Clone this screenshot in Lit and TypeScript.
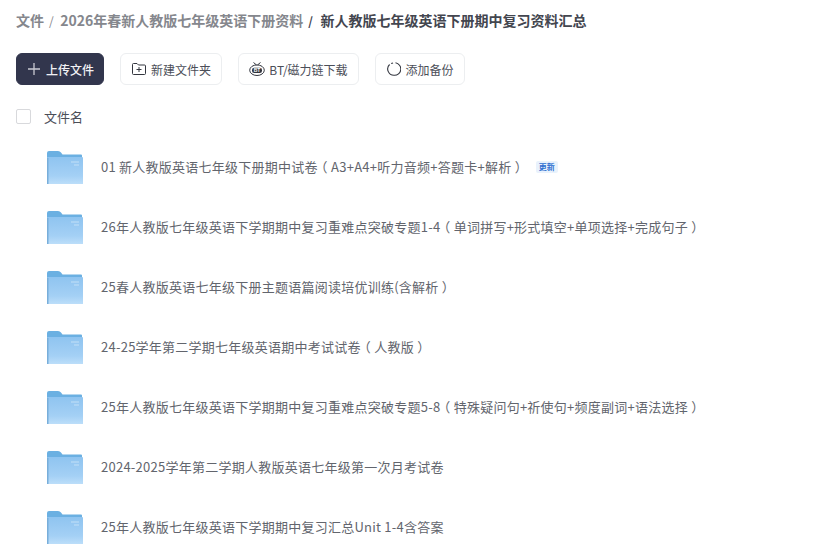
import { LitElement, html, css, svg } from "lit";
import { customElement } from "lit/decorators.js";

const ROWS = [
  "01 新人教版英语七年级下册期中试卷（A3+A4+听力音频+答题卡+解析）",
  "26年人教版七年级英语下学期期中复习重难点突破专题1-4（单词拼写+形式填空+单项选择+完成句子）",
  "25春人教版英语七年级下册主题语篇阅读培优训练(含解析）",
  "24-25学年第二学期七年级英语期中考试试卷（人教版）",
  "25年人教版七年级英语下学期期中复习重难点突破专题5-8（特殊疑问句+祈使句+频度副词+语法选择）",
  "2024-2025学年第二学期人教版英语七年级第一次月考试卷",
  "25年人教版七年级英语下学期期中复习汇总Unit 1-4含答案",
];

const label = (t: string) =>
  t.split(/([（）])/).map((p) => (p === "（" || p === "）" ? html`<span class="paren">${p}</span>` : p));

const folder = (i: number) => svg`<svg class="folder" viewBox="0 0 36 33" width="36" height="33">
  <defs><linearGradient id="g${i}" x1="0" y1="0" x2="0" y2="1"><stop offset="0" stop-color="#8fc4f0"/><stop offset="0.700" stop-color="#a4d0f5"/><stop offset="1" stop-color="#bcdef9"/></linearGradient></defs>
  <path d="M0 2 Q0 0 2 0 H11 Q13 0 14 1.500 L15.500 3.500 H34 Q35 3.500 35 4.500 V8 H0 Z" fill="#6bb0e2"/>
  <path d="M0 33 V7 Q0 6 1 6 H35 Q36 6 36 7 V33 Z" fill="url(#g${i})"/>
  <path d="M0 33 V7 L1.500 7 V33 Z" fill="#78aeda"/>
  <path d="M24 11 H32 M27 14 H32" stroke="#c3e0f7" stroke-width="1"/>
</svg>`;

@customElement("app-root")
export class AppRoot extends LitElement {
  static styles = css`
    :host { display: block; width: 817px; height: 548px; overflow: hidden; background: #fff;
      font-family: "Noto Sans CJK SC", "Noto Sans", sans-serif; color: #4a4d57; }
    .page { padding: 10px 16px 0; display: flex; flex-direction: column; }
    .crumbs { display: flex; align-items: center; height: 20px; font-size: 14px; font-weight: 700; color: #85878d; }
    .crumbs .sep { margin: 0 6.500px 0 5px; font-weight: 400; font-size: 12px; }
    .crumbs .cur { color: #43464f; margin-left: 1px; }
    .crumbs .sep.dark { color: #43464f; font-weight: 700; margin-left: 5px; }
    .actions { display: flex; gap: 16px; margin-top: 23px; }
    .btn { height: 32px; box-sizing: border-box; display: flex; align-items: center; justify-content: center;
      gap: 4px; border: 1px solid #eceef0; border-radius: 6px; font-size: 12px; color: #4b4e58; background: #fff; }
    .primary { width: 88px; padding-left: 2px; background: #32364d; border-color: #32364d; color: #f1f1f4; gap: 6px; font-weight: 500; }
    .b1 { width: 102px; padding-left: 1px; gap: 5px; } .b2 { width: 121px; } .b3 { width: 90px; padding-left: 1px; }
    .head { display: flex; align-items: center; height: 16px; margin-top: 23px; font-size: 13px; color: #4b4e58; }
    .check { width: 13px; height: 13px; border: 1px solid #d8d9dc; border-radius: 2px; margin-right: 13px; }
    .row { display: flex; align-items: center; height: 60px; padding-left: 31px; font-size: 13px; letter-spacing: 0.25px; color: #62656d; }
    .row .txt { padding-bottom: 2px; }
    .paren { display: inline-block; font-feature-settings: "halt"; padding: 0 3.250px; }
    .rows { margin-top: 13px; display: flex; flex-direction: column; }
    .folder { flex: none; margin-right: 18px; }
    .tag { margin-left: 11px; padding: 0 3px; height: 12px; line-height: 12px; font-size: 8px; font-weight: 700; letter-spacing: 0;
      color: #2f6fd0; background: #e9f2fc; border-radius: 2px; }
    svg.ic { flex: none; display: block; }
    .bt { font: 700 5px "Liberation Sans", sans-serif; fill: #fff; }
  `;

  render() {
    return html`<div class="page">
      <div class="crumbs">
        <span>文件</span><span class="sep">/</span>
        <span>2026年春新人教版七年级英语下册资料</span><span class="sep dark">/</span>
        <span class="cur">新人教版七年级英语下册期中复习资料汇总</span>
      </div>
      <div class="actions">
        <div class="btn primary">
          <svg class="ic" width="12" height="12" viewBox="0 0 12 12"><path d="M6 0V12M0 6H12" stroke="#c9cad2" stroke-width="1.300"/></svg>
          上传文件
        </div>
        <div class="btn b1">
          <svg class="ic" width="14" height="12" viewBox="0 0 14 12" fill="none" stroke="#33363f" stroke-width="1"><path d="M0.500 1.500Q0.500 0.500 1.500 0.500H5L6.500 2H12.500Q13.500 2 13.500 3V10.500Q13.500 11.500 12.500 11.500H1.500Q0.500 11.500 0.500 10.500Z"/><path d="M7 4V9M4.500 6.500H9.500"/></svg>
          新建文件夹
        </div>
        <div class="btn b2">
          <svg class="ic" width="16" height="14" viewBox="0 0 16 14" fill="none" stroke="#33363f" stroke-width="1"><path d="M4.500 0.500L7.500 3M11.500 0.500L8.500 3"/><ellipse cx="8" cy="8.200" rx="7.300" ry="5.300"/><rect x="3" y="5.700" width="10" height="5.200" rx="2.200" fill="#33363f" stroke="none"/><text class="bt" x="8" y="10.100" text-anchor="middle" stroke="none">BT</text></svg>
          BT/磁力链下载
        </div>
        <div class="btn b3">
          <svg class="ic" width="14" height="14" viewBox="0 0 14 14" fill="none" stroke="#33363f" stroke-width="1.100"><path d="M8.500 0.800A6.300 6.300 0 0 1 7 13.300A6.300 6.300 0 0 1 2.600 2.500"/><path d="M4.200 1.500L6 0.900"/></svg>
          添加备份
        </div>
      </div>
      <div class="head"><span class="check"></span>文件名</div>
      <div class="rows">
        ${ROWS.map((t, i) => html`<div class="row">${folder(i)}<span class="txt">${label(t)}</span>${i === 0 ? html`<span class="tag">更新</span>` : ""}</div>`)}
      </div>
    </div>`;
  }
}
